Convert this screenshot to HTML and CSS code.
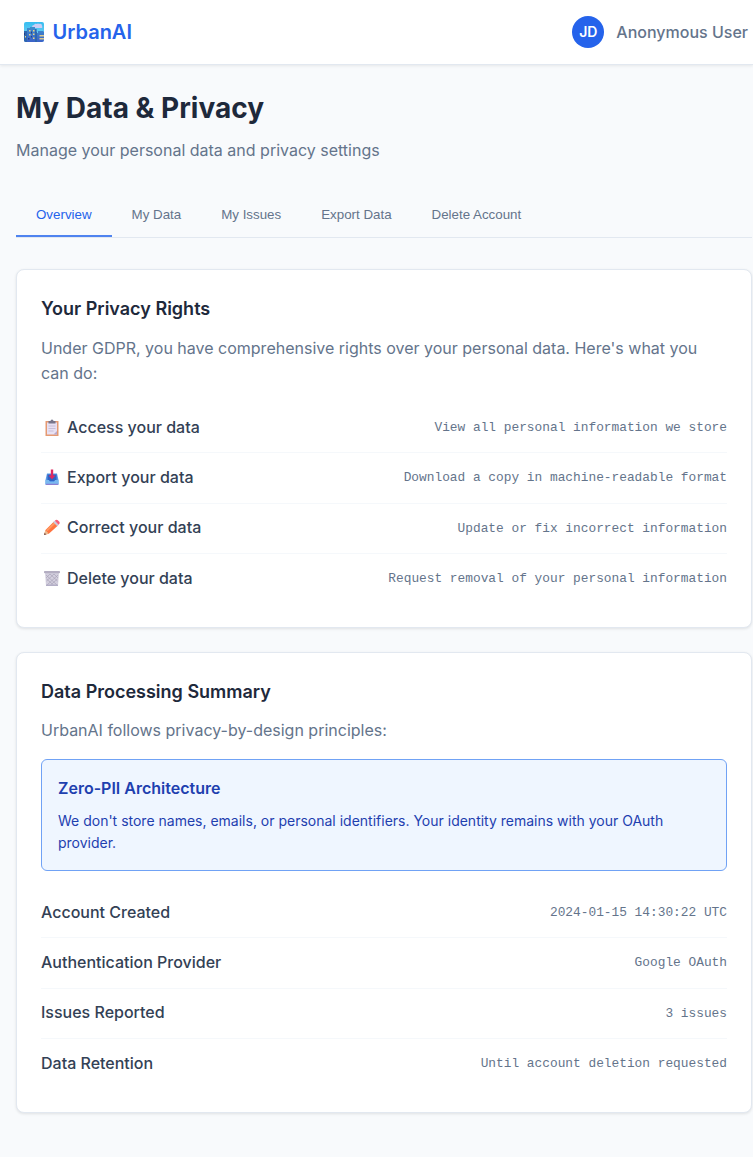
FILE: index.html
```
<!DOCTYPE html>
<html lang="en">
<head>
<meta charset="utf-8">
<title>UrbanAI - My Data &amp; Privacy</title>
<link rel="stylesheet" href="styles.css">
</head>
<body>
<header class="header">
  <div class="brand">
    <svg class="logo" viewBox="0 0 20 20" aria-hidden="true">
      <defs><linearGradient id="sky" x1="0" y1="0" x2="0" y2="1"><stop offset="0" stop-color="#35bdf0"/><stop offset="1" stop-color="#8bd8f5"/></linearGradient>
      <linearGradient id="tower" x1="0" y1="0" x2="0" y2="1"><stop offset="0" stop-color="#3f8ecb"/><stop offset="1" stop-color="#3b62c8"/></linearGradient></defs>
      <rect width="20" height="20" rx="2" fill="url(#sky)"/>
      <path d="M8 5q0-2 2-2 1-2 3-1 1-1 2 0 3-1 3 2 1 2-1 2h-7q-2 0-2-1z" fill="#cbcdf4"/>
      <path d="M0 9h3V6h3V5h5v2h2v4h1V9h5l1 1v8q0 2-2 2H2q-2 0-2-2z" fill="url(#tower)"/>
      <path d="M0 9h3v11H2q-2 0-2-2zM11 7v13h2V10h-1V7z" fill="#2d66ae"/>
      <path d="M5 8h1.500v1.500H5zM9 8h1.500v1.500H9zM5 12h1.500v1.500H5zM9 11.500h1.500V13H9zM9 15.500h1.500V17H9zM1 14h1v1.500H1z" fill="#e8d487"/>
      <path d="M7 9.500h1v2H7zM4 16h1.500v1.500H4zM7 14h1v1.500H7zM0 11h1v2H0z" fill="#283e83"/>
      <path d="M15.500 13h4.500v1.500h-4.500zM15.500 16h4.500v1.500h-4.500z" fill="#d9ca91"/>
    </svg>
    <span>UrbanAI</span>
  </div>
  <div class="user"><span class="avatar">JD</span><span class="user-name">Anonymous User</span></div>
</header>
<main class="page">
  <h1 class="title">My Data &amp; Privacy</h1>
  <p class="subtitle">Manage your personal data and privacy settings</p>
  <nav class="tabs">
    <button class="tab active">Overview</button>
    <button class="tab">My Data</button>
    <button class="tab">My Issues</button>
    <button class="tab">Export Data</button>
    <button class="tab">Delete Account</button>
  </nav>

  <section class="card">
    <h3 class="card-title">Your Privacy Rights</h3>
    <p class="text rights-text">Under GDPR, you have comprehensive rights over your personal data. Here's what you can do:</p>
    <div class="row">
      <span class="label"><svg class="icon" viewBox="0 0 22 18" aria-hidden="true">
        <path d="M4.500 2h13v15h-13z" fill="#e59a72"/><path d="M6 3.500h10v12H6z" fill="#e8e1f3"/><path d="M12.500 15.500H16V12z" fill="#b9a9cc"/>
        <path d="M7.500 2h2q0-1.500 1.500-1.500T12.500 2h2v2.500h-7z" fill="#77758a"/><path d="M7.500 7h7M7.500 9.500h7M7.500 12h5" stroke="#c5bbd6" stroke-width=".9"/></svg>Access your data</span>
      <span class="value">View all personal information we store</span>
    </div>
    <div class="row">
      <span class="label"><svg class="icon" viewBox="0 0 22 18" aria-hidden="true">
        <path d="M6 4.500h10l1.500 6.500v4q0 1-1 1h-11q-1 0-1-1v-4z" fill="#5799e8"/><path d="M6.500 5.500h9v6.500h-9z" fill="#2f62c4"/><path d="M4.500 11H8l1 2h4l1-2h3.500v4q0 1-1 1h-11q-1 0-1-1z" fill="#79b8ef"/><path d="M4.700 14.800h12.600q0 1.200-1 1.200H5.700q-1 0-1-1.200z" fill="#8b7fd2"/>
        <path d="M9.800.500h2.400v6h2.300L11 10.300 7.500 6.500h2.300z" fill="#df2960"/></svg>Export your data</span>
      <span class="value">Download a copy in machine-readable format</span>
    </div>
    <div class="row">
      <span class="label"><svg class="icon" viewBox="0 0 22 18" aria-hidden="true">
        <path d="M3 16l1.500-5L13 2.500l4 4-9.200 8.200z" fill="#ff733f"/><path d="M5 11l8.500-8 1.300 1.300-8.300 8z" fill="#ff9861"/><path d="M3 16l1.400-4.700 3.300 3.300z" fill="#e9bd92"/><path d="M3 16l.7-2 1.400 1.300z" fill="#503b40"/>
        <path d="M12.200 3.300l1.600-1.500 4 4-1.500 1.500z" fill="#c9c9dc"/><path d="M13.800 1.800l1-.9q1-.6 2 .3l1.500 1.500q.8 1 .2 1.900l-1 1.100z" fill="#f75d79"/></svg>Correct your data</span>
      <span class="value">Update or fix incorrect information</span>
    </div>
    <div class="row">
      <span class="label"><svg class="icon" viewBox="0 0 22 18" aria-hidden="true">
        <path d="M4 2.500h14l-1 13.500H5z" fill="#d3cfde"/><path d="M5 5l11 10M5.500 9l7 6M9 4l7.500 7M13 4l4 4M17 5L6 15M16.500 9l-7 6M13 4l-7.500 7M9 4L5 8" stroke="#a39cb2" stroke-width=".6"/>
        <rect x="3" y="1" width="16" height="2.200" rx=".8" fill="#b4aec2"/><path d="M5 14.500h12V16H5z" fill="#b3aec6"/></svg>Delete your data</span>
      <span class="value">Request removal of your personal information</span>
    </div>
  </section>

  <section class="card">
    <h3 class="card-title">Data Processing Summary</h3>
    <p class="text">UrbanAI follows privacy-by-design principles:</p>
    <div class="notice">
      <h4 class="notice-title">Zero-PII Architecture</h4>
      <p class="notice-text">We don't store names, emails, or personal identifiers. Your identity remains with your OAuth provider.</p>
    </div>
    <div class="row"><span class="label">Account Created</span><span class="value">2024-01-15 14:30:22 UTC</span></div>
    <div class="row"><span class="label">Authentication Provider</span><span class="value">Google OAuth</span></div>
    <div class="row"><span class="label">Issues Reported</span><span class="value">3 issues</span></div>
    <div class="row"><span class="label">Data Retention</span><span class="value">Until account deletion requested</span></div>
  </section>
</main>
</body>
</html>
```
FILE: styles.css
```
* { box-sizing: border-box; margin: 0; padding: 0; }
body { background: #f8fafc; color: #1e293b; font: 16px/1.6 Inter, sans-serif; overflow: hidden; }
.header { height: 65px; padding: 0 5px 0 24px; display: flex; align-items: center; justify-content: space-between; background: #fff; border-bottom: 1px solid #e2e8f0; box-shadow: 0 1px 3px rgba(0, 0, 0, .08); }
.brand { display: flex; align-items: center; gap: 8.500px; color: #2563eb; font-size: 20px; font-weight: 600; }
.logo { width: 20px; height: 20px; }
.user { display: flex; align-items: center; gap: 12px; color: #64748b; font-weight: 500; }
.user-name { padding-top: 1px; }
.avatar { width: 32px; height: 32px; display: flex; align-items: center; justify-content: center; border-radius: 50%; background: #2563eb; color: #fff; font-size: 14px; font-weight: 600; }
.page { width: 752px; padding: 21px 0 0 16px; }
.title { font-size: 28px; line-height: 45px; font-weight: 700; }
.subtitle { margin-top: 7px; color: #64748b; }
.tabs { display: flex; height: 46px; margin: 28.400px 0 31.400px; border-bottom: 1px solid #e2e8f0; }
.tab { border: 0; border-bottom: 2px solid transparent; background: none; padding: 2px 20px 0; color: #64748b; font: 500 13.333px "Liberation Sans", Arial, sans-serif; }
.tab.active { color: #2563eb; border-color: #4f83ef; }
.card { background: #fff; border: 1px solid #e2e8f0; border-radius: 8px; padding: 24px; margin-bottom: 24px; box-shadow: 0 1px 3px rgba(0, 0, 0, .1); }
.card-title { font-size: 18px; line-height: 28.800px; font-weight: 600; padding-top: .400px; margin-bottom: 12px; }
.text { color: #64748b; }
.rights-text { margin-bottom: 16.250px; }
.row { height: 50.300px; display: flex; align-items: center; justify-content: space-between; border-bottom: 1px solid #f5f8fb; }
.row:last-child { border-bottom: 0; height: 49.400px; }
.label { display: flex; align-items: center; gap: 4px; color: #334155; font-weight: 500; }
.icon { width: 22px; height: 18px; }
.value { color: #64748b; font: 12.830px "Liberation Mono", monospace; }
.notice { margin: 15.400px 0 17px; padding: 15.600px 16px; border: 1px solid #70a2f5; border-radius: 6px; background: #eff6ff; color: #1e40af; }
.notice-title { font-size: 16px; font-weight: 600; margin-bottom: 8px; }
.notice-text { font-size: 14px; line-height: 22.400px; }
```
